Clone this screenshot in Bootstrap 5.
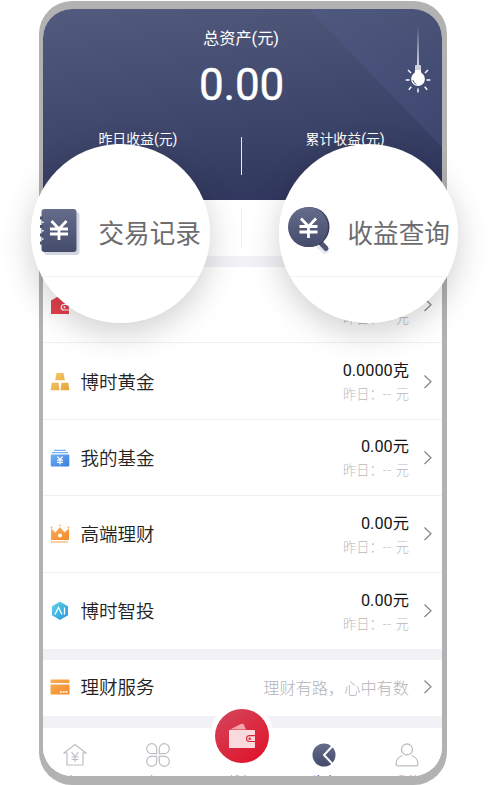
<!DOCTYPE html>
<html lang="zh-CN">
<head>
<meta charset="utf-8">
<meta name="viewport" content="width=device-width, initial-scale=1">
<title>总资产</title>
<link href="https://cdn.jsdelivr.net/npm/bootstrap@5.3.0/dist/css/bootstrap.min.css" rel="stylesheet">
<style>
body{font-family:Roboto,"Noto Sans CJK SC",sans-serif;color:#222;background:#fff;height:785px;overflow:hidden;line-height:1}
svg{display:block;flex:none}
.phone{width:408px;height:784px;margin:1px 0 0 39px;padding:8px 5px 8px 4px;background:#b2b2b2;border-radius:33px}
.screen{height:767px;border-radius:29px;background:#fff}
.hero{height:191px;padding-top:18px;color:#fff;background:linear-gradient(225deg,rgba(90,104,155,0) 0,rgba(90,104,155,.2) 28.700%,transparent 29%),linear-gradient(172deg,#525b7d 0,#434c70 42%,#2d335a 100%)}
.hero-glow{background:linear-gradient(46deg,transparent 77%,rgba(84,98,150,.26) 77.300%,rgba(84,98,150,0) 100%),linear-gradient(172deg,#525b7d 0,#434c70 42%,#2d335a 100%)}
.hero-label{font-size:16.2px;line-height:22px;margin-right:3px;padding-top:1px}
.hero-total{font-size:44px;line-height:50px;margin:10px 2px 0 0;letter-spacing:-.2px;-webkit-text-stroke:.4px #fff}
.hero-pair{margin:27px 2px 0 0;height:38px}
.hero-pair span{font-size:13.9px;line-height:20px;margin-top:-8px}
.hero-pair i{width:1.4px;height:38px;background:#e8eaf3}
.bulb{right:9px;top:18px}
.quick{height:56px;padding:8px 2px 0 0}
.quick i{width:1px;height:41px;background:#eee}
.band{background:#f2f2f6}
.line{height:76.4px;padding:3px 9px 0 7px;border-bottom:1px solid #f0f0f1}
.line svg,.service svg{position:relative;top:-1px}
.line:last-child{border-bottom:0}
.name{font-size:18.5px;line-height:24px;margin-left:10.500px;font-weight:350}
.amount{font-size:16.3px;line-height:22px;color:#161616}
.prev{font-size:13.2px;line-height:20px;margin-top:3px;color:#b9b9bc;font-weight:300;white-space:pre}
.prev span{display:inline-block;letter-spacing:.8px}
.chev{margin-left:14px}
.service{height:56px;padding:1px 9px 0 7px}
.slogan{font-size:16.2px;color:#b4b4b8;font-weight:300;position:relative;top:1px}
.tabs{height:48px}
.tab-item{width:83.4px;padding-top:15px;font-size:12px;color:#999}
.tab-item span{line-height:12px;margin-top:9px}
.fab{width:54px;height:54px;left:171.5px;top:-19.500px;border-radius:50%;background:linear-gradient(145deg,#d4475b,#e00f28);box-shadow:0 0 0 5px #fff}
.lens{width:179px;height:179px;top:143.5px;border-radius:50%;background:#fff;overflow:hidden}
.halo{width:179px;height:179px;top:143.5px;border-radius:50%;box-shadow:0 10px 32px rgba(0,0,0,.19)}
.left-lens{left:30.5px}
.right-lens{left:278.5px}
.lens-row{height:133.500px;padding-top:46px;border-bottom:1px solid #f3f3f3}
.lens-text{font-size:25.6px;color:#6c6c6f;line-height:36px;white-space:nowrap}
</style>
<script src="https://cdn.jsdelivr.net/npm/bootstrap@5.3.0/dist/js/bootstrap.bundle.min.js"></script>
</head>
<body class="position-relative">
<svg width="0" height="0" class="position-absolute">
<defs>
<linearGradient id="navy" x2="0" y2="1"><stop stop-color="#666d8b"/><stop offset="1" stop-color="#444b6b"/></linearGradient>
<linearGradient id="gold" x2="1" y2="1"><stop stop-color="#f5ca69"/><stop offset="1" stop-color="#e7a33b"/></linearGradient>
<linearGradient id="blue" x2="1" y2="1"><stop stop-color="#71aff6"/><stop offset="1" stop-color="#397de0"/></linearGradient>
<linearGradient id="orange" x2="1" y2="1"><stop stop-color="#f9ad59"/><stop offset="1" stop-color="#f48a28"/></linearGradient>
<linearGradient id="cyan" x2="1" y2="1"><stop stop-color="#62d3e8"/><stop offset="1" stop-color="#2795dc"/></linearGradient>
<linearGradient id="cord" x2="0" y2="1"><stop stop-color="#fff" stop-opacity="0"/><stop offset="1" stop-color="#fff"/></linearGradient>
<symbol id="chevron" viewBox="0 0 10 16"><path d="M1.500 1.500 8 7.700 1.500 14" fill="none" stroke="#858588" stroke-width="1.200"/></symbol>
</defs>
</svg>

<div class="phone">
<main class="screen overflow-hidden">
  <header class="hero hero-glow position-relative text-center">
    <div class="hero-label">总资产(元)</div>
    <div class="hero-total">0.00</div>
    <div class="hero-pair d-flex">
      <span class="flex-fill w-50 pe-2">昨日收益(元)</span><i></i><span class="flex-fill w-50 ps-2">累计收益(元)</span>
    </div>
    <svg class="bulb position-absolute" width="30" height="68" viewBox="0 0 30 68">
      <rect x="14.200" y="0" width="1.600" height="41" fill="url(#cord)"/>
      <rect x="12" y="38" width="6" height="6" rx="1" fill="#cfd2dd"/>
      <path d="M12.300 43h5.400l.8 3.500h-7z" fill="#fff"/><circle cx="15" cy="52" r="6.900" fill="#fff"/>
      <path d="M9.800 53q.7 3.300 3.500 4.300" fill="none" stroke="#555d80"/>
      <path d="M2.700 53h3.800M23.500 53h3.800M5 43l3 3M25 43l-3 3M5.800 62.700l2.500-3M24.200 62.700l-2.500-3M15 61.500v4" stroke="#fff" stroke-width="1.400"/>
    </svg>
  </header>
  <div class="quick d-flex justify-content-center"><i></i></div>
  <div class="band" style="height:11px"></div>

  <section>
    <div class="line d-flex align-items-center">
      <svg width="20" height="20" viewBox="0 0 20 20"><path d="M1 5.500 9 1l4 4.500h6V19H1z" fill="#e5404d"/><path d="M19 9.500h-5a2.500 2.500 0 0 0 0 5.500h5" fill="none" stroke="#fff" stroke-width="1.200"/><circle cx="14.500" cy="12.200" r="1" fill="#fff"/></svg>
      <div class="name"></div>
      <div class="ms-auto text-end"><div class="amount">0.00元</div><div class="prev">昨日：<span>-- </span>元</div></div>
      <svg class="chev" width="10" height="16"><use href="#chevron"/></svg>
    </div>
    <div class="line d-flex align-items-center">
      <svg width="20" height="20" viewBox="0 0 20 20"><path d="M6.500 1h7l1.300 7.300H5.200zM1.800 10.700h6.700l1 7.600H.6zM11.500 10.700h6.700l1.200 7.600h-8.900z" fill="url(#gold)"/></svg>
      <div class="name">博时黄金</div>
      <div class="ms-auto text-end"><div class="amount">0.0000克</div><div class="prev">昨日：<span>-- </span>元</div></div>
      <svg class="chev" width="10" height="16"><use href="#chevron"/></svg>
    </div>
    <div class="line d-flex align-items-center">
      <svg width="20" height="20" viewBox="0 0 20 20"><path d="M4 2.300h12M2 4.700h16" stroke="#76aef2" stroke-width="1.200"/><rect x=".7" y="6.500" width="18.600" height="12" rx="1" fill="url(#blue)"/><path d="M7.500 8.500 10 11.500l2.500-3M10 11.500v5M7 12.200h6M7 14.400h6" fill="none" stroke="#fff" stroke-width="1.200"/></svg>
      <div class="name">我的基金</div>
      <div class="ms-auto text-end"><div class="amount">0.00元</div><div class="prev">昨日：<span>-- </span>元</div></div>
      <svg class="chev" width="10" height="16"><use href="#chevron"/></svg>
    </div>
    <div class="line d-flex align-items-center">
      <svg width="20" height="20" viewBox="0 0 20 20"><path d="M1 4.500 5.500 8.500 10 3l4.500 5.500L19 4.500V16H1z" fill="url(#orange)"/><path d="M1 18h17" stroke="#f6a04a" stroke-width="1.200"/><circle cx="10" cy="11.500" r="2" fill="#fff"/><g fill="#f6a65a"><circle cx="1.500" cy="3.500" r=".9"/><circle cx="10" cy="1.300" r=".9"/><circle cx="18.500" cy="3.500" r=".9"/></g></svg>
      <div class="name">高端理财</div>
      <div class="ms-auto text-end"><div class="amount">0.00元</div><div class="prev">昨日：<span>-- </span>元</div></div>
      <svg class="chev" width="10" height="16"><use href="#chevron"/></svg>
    </div>
    <div class="line d-flex align-items-center">
      <svg width="20" height="20" viewBox="0 0 20 20"><path d="M10 .8 18 5.300v9L10 19l-8-4.700v-9z" fill="url(#cyan)"/><path d="m5 13.500 3.500-7 3.500 7M14.500 6.500v7" fill="none" stroke="#fff" stroke-width="1.300"/></svg>
      <div class="name">博时智投</div>
      <div class="ms-auto text-end"><div class="amount">0.00元</div><div class="prev">昨日：<span>-- </span>元</div></div>
      <svg class="chev" width="10" height="16"><use href="#chevron"/></svg>
    </div>
  </section>

  <div class="band" style="height:11px"></div>
  <div class="service d-flex align-items-center">
    <svg width="20" height="20" viewBox="0 0 20 20"><path d="M.5 3.500a1 1 0 0 1 1-1h17a1 1 0 0 1 1 1V6H.5zM.5 7.500h19v9a1 1 0 0 1-1 1h-17a1 1 0 0 1-1-1z" fill="url(#orange)"/><path d="M10 15h7.500" stroke="#fff" stroke-width="1.500" stroke-dasharray="2 .7"/></svg>
    <div class="name">理财服务</div>
    <div class="slogan ms-auto">理财有路，心中有数</div>
    <svg class="chev" width="10" height="16"><use href="#chevron"/></svg>
  </div>
  <div class="band" style="height:12.500px"></div>

  <nav class="tabs d-flex justify-content-between position-relative bg-white">
    <div class="tab-item d-flex flex-column align-items-center me-auto" style="margin-left:-10px">
      <svg width="24" height="24" viewBox="0 0 24 24" fill="none" stroke="#bdbec3" stroke-width="1.200"><path d="M4 10H1L12 1.500 23 10h-3v12H4zM8.500 9l3.500 4.500L15.500 9M12 13.500V19M8.500 14h7M8.500 16.500h7"/></svg><span>首页</span></div>
    <div class="tab-item d-flex flex-column align-items-center me-auto">
      <svg width="24" height="24" viewBox="0 0 24 24" fill="none" stroke="#bdbec3" stroke-width="1.200"><path d="M10.700 10.700H6A5 5 0 1 1 10.700 6zM13.300 10.700H18A5 5 0 1 0 13.300 6zM10.700 13.300H6a5 5 0 1 0 4.700 4.700zM13.300 13.300H18a5 5 0 1 1-4.700 4.700z"/></svg><span>产品</span></div>
    <div class="tab-item d-flex flex-column align-items-center me-auto">
      <svg width="24" height="24"></svg><span>钱包</span></div>
    <div class="tab-item d-flex flex-column align-items-center me-auto text-dark">
      <svg width="24" height="24" viewBox="0 0 24 24"><circle cx="12" cy="12" r="11.500" fill="url(#navy)"/><path d="M21 2.500 12 12l9 9.500" fill="none" stroke="#fff" stroke-width="2"/></svg><span>资产</span></div>
    <div class="tab-item d-flex flex-column align-items-center" style="margin-right:-7px">
      <svg width="24" height="24" viewBox="0 0 24 24" fill="none" stroke="#bdbec3" stroke-width="1.300"><circle cx="12" cy="6.500" r="5.500"/><path d="M7.500 12.500C3 14 1 18 1 21q0 1.800 1.800 1.800h18.400Q23 22.800 23 21c0-3-2-7-6.500-8.500"/></svg><span>我的</span></div>
    <div class="fab position-absolute d-flex align-items-center justify-content-center">
      <svg width="30" height="28" viewBox="0 0 30 28"><path d="M3 7.500 14 2q2-1 3 1l2 4.500z" fill="#f2a6ae"/><path d="M2 8h25q1 0 1 1v4h-5.500a3.500 3.500 0 0 0 0 7H28v5q0 1-1 1H2z" fill="#fbdadd"/><path d="M28 14.300h-5.500a2.400 2.400 0 0 0 0 4.800H28z" fill="#fbdadd"/><circle cx="22.700" cy="16.700" r="1.300" fill="#dc3043"/></svg>
    </div>
  </nav>
</main>
</div>

<div class="halo left-lens position-absolute"></div>
<div class="halo right-lens position-absolute"></div>
<div class="lens left-lens position-absolute">
  <div class="lens-row d-flex align-items-start" style="padding-left:6px">
    <svg width="46" height="56" viewBox="0 0 46 56" style="margin-top:11px"><rect x="7" y="11" width="35.500" height="43" rx="3" fill="#d3d6e1"/><rect x="4.500" y="8" width="35" height="43" rx="3" fill="url(#navy)"/><path d="M3 17h3M3 25.500h3M3 34h3M3 42h3" stroke="#4a5170" stroke-width="3"/><path d="M5 21.200h1.500M5 29.700h1.500M5 38h1.500" stroke="#fff" stroke-width="1.500"/><path d="M14.500 20 22 28l7.500-8M22 28v11M13 28h18M13 33h18" fill="none" stroke="#fff" stroke-width="2.800"/></svg>
    <div class="lens-text" style="margin:26px 0 0 16px">交易记录</div>
  </div>
</div>
<div class="lens right-lens position-absolute">
  <div class="lens-row d-flex align-items-start" style="padding-left:4px">
    <svg width="50" height="56" viewBox="0 0 50 56" style="margin-top:11px"><path d="M34 41 42 49" stroke="#c9cddb" stroke-width="8" stroke-linecap="round" opacity=".4"/><path d="M36 40 43 47.500" stroke="#4d5474" stroke-width="5" stroke-linecap="round"/><circle cx="26.500" cy="26" r="20" fill="#353c5a"/><circle cx="25" cy="26" r="20" fill="url(#navy)"/><path d="M18 17.500 25.500 25.500l7.500-8M25.500 25.500V37M16.500 25.500h18M16.500 31h18" fill="none" stroke="#fff" stroke-width="2.800"/></svg>
    <div class="lens-text" style="margin:26px 0 0 15px">收益查询</div>
  </div>
</div>
</body>
</html>
